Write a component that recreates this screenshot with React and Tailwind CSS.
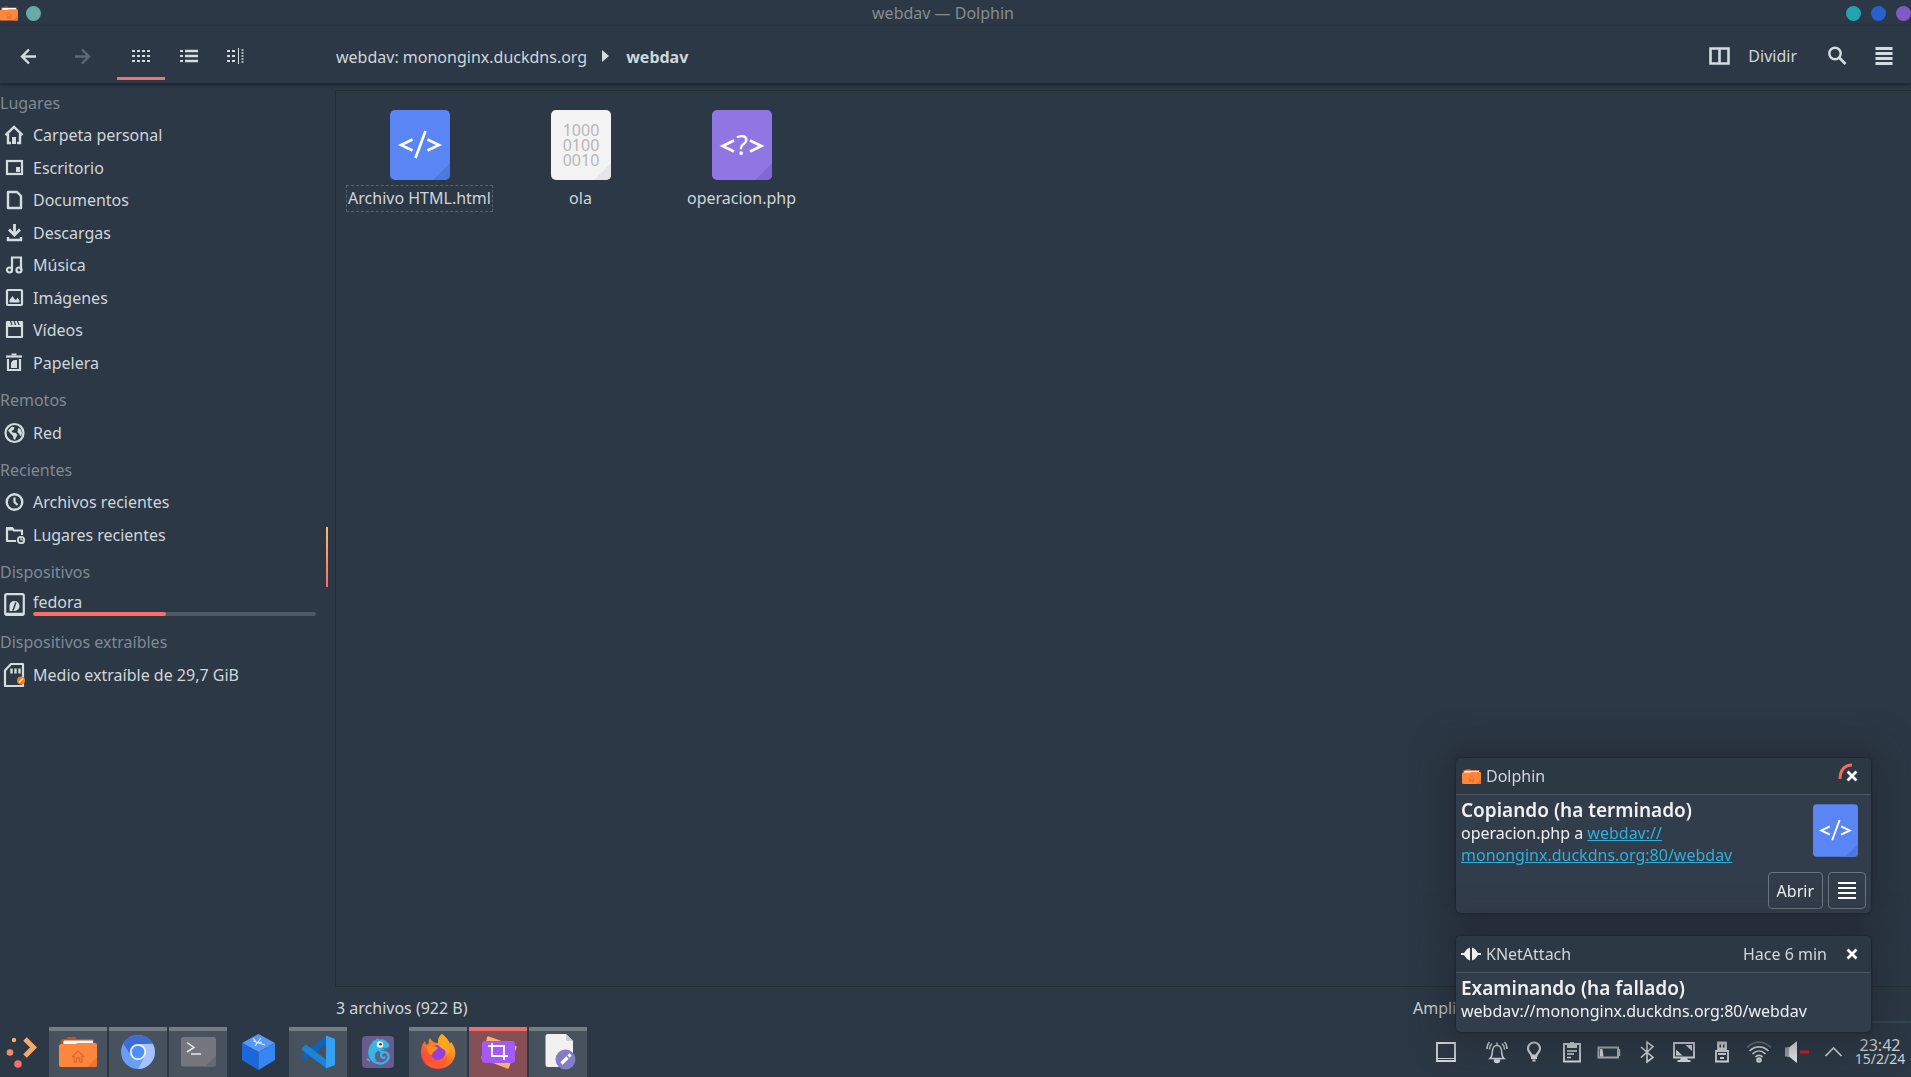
import React from "react";

const LIGHT = "#d3dce0";

function Icon({ size = 20, box, children, className = "" }) {
  const b = box || size;
  return (
    <svg
      width={size}
      height={size}
      viewBox={`0 0 ${b} ${b}`}
      fill="none"
      className={`shrink-0 ${className}`}
      aria-hidden="true"
    >
      {children}
    </svg>
  );
}

/* ---------- sidebar icons (22 x 26 grid) ---------- */

function PlaceIcon({ children }) {
  return (
    <svg width="22" height="26" viewBox="0 0 22 26" fill="none" className="shrink-0" aria-hidden="true">
      {children}
    </svg>
  );
}

const placeIcons = {
  home: (
    <PlaceIcon>
      <path d="M2.500 13.200 11 5l8.500 8.200" stroke={LIGHT} strokeWidth="2.400" />
      <path d="M5 11.500V21h3M17 11.500V21h-3" stroke={LIGHT} strokeWidth="2.400" />
      <rect x="9" y="15" width="4" height="7" fill={LIGHT} />
    </PlaceIcon>
  ),
  desktop: (
    <PlaceIcon>
      <rect x="4" y="6" width="15" height="13" stroke={LIGHT} strokeWidth="2.200" />
      <rect x="13" y="12" width="4" height="5" fill={LIGHT} />
    </PlaceIcon>
  ),
  documents: (
    <PlaceIcon>
      <path d="M5 5h9l4 4v12H5z" stroke={LIGHT} strokeWidth="2.400" strokeLinejoin="round" />
    </PlaceIcon>
  ),
  downloads: (
    <PlaceIcon>
      <path d="M11.500 4v10M6 9.500l5.500 5.500L17 9.500" stroke={LIGHT} strokeWidth="2.800" />
      <path d="M5 17v3h13v-3" stroke={LIGHT} strokeWidth="2.400" />
    </PlaceIcon>
  ),
  music: (
    <PlaceIcon>
      <path d="M9 18V5.500h9V18" stroke={LIGHT} strokeWidth="2.200" />
      <circle cx="6.500" cy="18" r="2.500" stroke={LIGHT} strokeWidth="2.200" />
      <circle cx="16" cy="18" r="2.500" stroke={LIGHT} strokeWidth="2.200" />
    </PlaceIcon>
  ),
  images: (
    <PlaceIcon>
      <rect x="4" y="5" width="15" height="15" rx="1" stroke={LIGHT} strokeWidth="2.200" />
      <path d="M6.500 17.500V15L9.500 11l2 3 1.500 1 1.500-2.500 2 3v2z" fill={LIGHT} />
    </PlaceIcon>
  ),
  videos: (
    <PlaceIcon>
      <path d="M4 8v12h15V5H4z" stroke={LIGHT} strokeWidth="2.200" strokeLinejoin="round" />
      <path d="M3.500 5h15.500v5H3.500z" fill={LIGHT} />
      <path d="m7.500 4 1.500 4M11 4l1.500 4M14.500 4 16 8" stroke="#2c3845" strokeWidth="1.200" />
    </PlaceIcon>
  ),
  trash: (
    <PlaceIcon>
      <path d="M3 6.500h16" stroke={LIGHT} strokeWidth="2.200" />
      <path d="M8.500 4.500h5" stroke={LIGHT} strokeWidth="2" />
      <path d="M5 9v11h12V9" stroke={LIGHT} strokeWidth="2.200" />
      <path d="M8 12.500 10.500 10H14v8H8z" fill={LIGHT} />
    </PlaceIcon>
  ),
  network: (
    <PlaceIcon>
      <circle cx="11.500" cy="13" r="9" stroke={LIGHT} strokeWidth="2.200" />
      <path d="M5 10.500 9 6.500l2.500 1-1 2.500L8.500 11l1 1.500 3.500.5 1.500 2-1.500 2.500-1 2.500-1.500-1-.5-3L7 13z" fill={LIGHT} />
      <path d="m15 8 2.500 1 1.500 3.500-.5 3-1.500.5-1-2.500-1.500-1z" fill={LIGHT} />
    </PlaceIcon>
  ),
  clock: (
    <PlaceIcon>
      <circle cx="11.500" cy="13" r="7.800" stroke={LIGHT} strokeWidth="2.400" />
      <path d="M11.500 8.500V13l3 3" stroke={LIGHT} strokeWidth="2.200" />
    </PlaceIcon>
  ),
  recentFolder: (
    <PlaceIcon>
      <path d="M13 19H4V6h5l2 2.500h8V13" stroke={LIGHT} strokeWidth="2.200" strokeLinejoin="round" />
      <path d="M3 5h6.500l2 3.500H3z" fill={LIGHT} />
      <circle cx="18" cy="18" r="3.200" stroke={LIGHT} strokeWidth="1.800" />
      <path d="M18 15.500V18h2" stroke={LIGHT} strokeWidth="1.200" />
    </PlaceIcon>
  ),
  disk: (
    <PlaceIcon>
      <rect x="2.200" y="2.200" width="18.600" height="20.600" rx="1.500" stroke={LIGHT} strokeWidth="2.200" />
      <path d="M6.500 19v-5.500a5 5 0 0 1 5-4.500 5 5 0 0 1 0 10z" fill={LIGHT} />
      <path d="M9.500 18.500c2-1 2-6.500 3.500-8" stroke="#2c3845" strokeWidth="1.500" />
      <path d="M3 21.500h17" stroke={LIGHT} strokeWidth="1.500" />
    </PlaceIcon>
  ),
  card: (
    <PlaceIcon>
      <path d="M8 2h12v22H2V8.500z" stroke={LIGHT} strokeWidth="2.200" strokeLinejoin="round" />
      <path d="M8.500 6.500v5M12.500 6.500v5M16.500 6.500v5" stroke={LIGHT} strokeWidth="2.400" />
      <circle cx="18" cy="18.500" r="4" fill="#f08218" />
      <path d="m16 20.500 4-4" stroke="#fbe6cf" strokeWidth="1.400" />
    </PlaceIcon>
  ),
};

/* ---------- file type icons ---------- */

function HtmlFile({ className }) {
  return (
    <svg viewBox="0 0 60 70" className={className} fill="none" aria-hidden="true">
      <rect width="60" height="70" rx="5" fill="#5a86f5" />
      <path d="M60 53v12a5 5 0 0 1-5 5H43z" fill="#4d78e2" />
      <path d="M22.500 29.500 11 35l11.500 5.500M37.500 29.500 49 35l-11.500 5.500" stroke="#fff" strokeWidth="2.600" />
      <path d="m35.500 21-10 27" stroke="#fff" strokeWidth="2.600" />
    </svg>
  );
}

function BinaryFile({ className }) {
  return (
    <svg viewBox="0 0 60 70" className={className} fill="none" aria-hidden="true">
      <rect width="60" height="70" rx="5" fill="#f3f3f3" />
      <path d="M60 53v12a5 5 0 0 1-5 5H43z" fill="#e6e6e6" />
      <g fill="#b7b7b7" fontSize="16" textAnchor="middle" fontFamily="'Noto Sans', sans-serif">
        <text x="30" y="26">1000</text>
        <text x="30" y="41">0100</text>
        <text x="30" y="56">0010</text>
      </g>
    </svg>
  );
}

function PhpFile({ className }) {
  return (
    <svg viewBox="0 0 60 70" className={className} fill="none" aria-hidden="true">
      <rect width="60" height="70" rx="5" fill="#9076e3" />
      <path d="M60 53v12a5 5 0 0 1-5 5H43z" fill="#8168d2" />
      <path d="M22 30.500 10.500 36 22 41.500M38 30.500 49.500 36 38 41.500" stroke="#fff" strokeWidth="2.600" />
      <text x="30" y="44.500" fill="#fff" fontSize="27" textAnchor="middle" fontFamily="'Noto Sans', sans-serif">
        ?
      </text>
    </svg>
  );
}

function FolderIcon({ className }) {
  return (
    <svg viewBox="0 0 38 30" className={className} fill="none" aria-hidden="true">
      <path d="M2 9V4a2 2 0 0 1 2-2h3l2-2h7l2 2h15a2 2 0 0 1 2 2v6z" fill="#c4541c" />
      <path d="M4.500 10V4.500a1 1 0 0 1 1-1H34V10z" fill="#fff" />
      <path d="M0 9a2 2 0 0 1 2-2h14l3-1h17a2 2 0 0 1 2 2v20a2 2 0 0 1-2 2H2a2 2 0 0 1-2-2z" fill="#ff863c" />
      <path d="M38 20v8a2 2 0 0 1-2 2h-8z" fill="#ee7530" />
      <path d="m13 20 6-6 6 6M15 19v6h2.500v-4h3v4H23v-6" stroke="#d96a2c" strokeWidth="1.300" />
    </svg>
  );
}

/* ---------- window ---------- */

function TitleBar() {
  return (
    <header className="flex h-[26px] items-center justify-between overflow-hidden">
      <div className="flex w-20 items-center gap-2">
        <FolderIcon className="h-[15px] w-[18px]" />
        <button aria-label="Fijar ventana" className="size-[15px] rounded-full bg-[#67aaa6]" />
      </div>
      <h1 className="pr-10 text-base text-[#868c93]">webdav — Dolphin</h1>
      <div className="flex w-[65px] shrink-0 gap-[10px]">
        <button aria-label="Minimizar" className="size-[15px] shrink-0 rounded-full bg-[#22a3b1]" />
        <button aria-label="Maximizar" className="size-[15px] shrink-0 rounded-full bg-[#2661cf]" />
        <button aria-label="Cerrar" className="size-[15px] shrink-0 rounded-full bg-[#7e5bc6]" />
      </div>
    </header>
  );
}

function ToolButton({ label, active, className = "w-[47px]", children }) {
  return (
    <button
      aria-label={label}
      className={`flex h-12 items-center justify-center border-b-[3px] pt-[2px] ${
        active ? "border-[#f4706a]" : "border-transparent"
      } ${className}`}
    >
      {children}
    </button>
  );
}

function Dots({ xs, size = 3 }) {
  return xs.flatMap((x) =>
    [4, 9, 14].map((y) => <rect key={`${x}-${y}`} x={x} y={y} width={size} height="2" fill={LIGHT} />)
  );
}

function Toolbar() {
  return (
    <div className="relative z-10 flex h-[58px] items-center border-b border-[#222a34] pt-[3px] shadow-[0_1px_3px_#1c232d]">
      <div className="flex w-[335px] shrink-0">
        <ToolButton label="Atrás" className="w-[57px]">
          <Icon>
            <path d="M17 10.500H4M10 3.500l-7 7 7 7" stroke={LIGHT} strokeWidth="2.400" />
          </Icon>
        </ToolButton>
        <ToolButton label="Adelante" className="mr-[10px] w-[50px]">
          <Icon>
            <path d="M3 10.500h13M10 3.500l7 7-7 7" stroke="#5c6874" strokeWidth="2.400" />
          </Icon>
        </ToolButton>
        <ToolButton label="Iconos" active className="w-12">
          <Icon>
            <Dots xs={[1, 6, 11, 16]} />
          </Icon>
        </ToolButton>
        <ToolButton label="Compacto">
          <Icon>
            <Dots xs={[1]} />
            <path d="M6 5h13M6 10h13M6 15h13" stroke={LIGHT} strokeWidth="2.400" />
          </Icon>
        </ToolButton>
        <ToolButton label="Detalles">
          <Icon>
            <Dots xs={[1, 6]} />
            <path d="M12.500 2v16" stroke={LIGHT} />
            <path d="M15.500 4h2M15.500 7h2M15.500 10h2M15.500 13h2M15.500 16h2" stroke={LIGHT} strokeWidth="1.500" />
          </Icon>
        </ToolButton>
      </div>
      <nav className="flex flex-1 items-center pt-[2px] pl-px" aria-label="Ubicación">
        <a href="#servidor">webdav: mononginx.duckdns.org</a>
        <svg width="7" height="12" viewBox="0 0 7 12" className="mr-[13px] mb-[3px] ml-[15px]" aria-hidden="true">
          <path d="M0 0v12l7-6z" fill={LIGHT} />
        </svg>
        <a href="#webdav" className="pl-1 font-bold">
          webdav
        </a>
      </nav>
      <div className="flex items-center pr-1">
        <button className="flex h-12 items-center gap-[18px] pr-4">
          <svg width="21" height="18" viewBox="0 0 21 18" fill="none" aria-hidden="true">
            <path d="M1.500 1.500h18v15h-18zM10.500 1v16" stroke={LIGHT} strokeWidth="2.600" />
          </svg>
          Dividir
        </button>
        <ToolButton label="Buscar">
          <Icon>
            <circle cx="8" cy="7.500" r="5.700" stroke={LIGHT} strokeWidth="2.400" />
            <path d="m12 11.500 6.500 6.500" stroke={LIGHT} strokeWidth="2.600" />
          </Icon>
        </ToolButton>
        <ToolButton label="Menú">
          <Icon>
            <path d="M1.500 2.500h17M1.500 7.500h17M1.500 12.500h17M1.500 17.500h17" stroke={LIGHT} strokeWidth="3" />
          </Icon>
        </ToolButton>
      </div>
    </div>
  );
}

const places = [
  {
    title: "Lugares",
    height: "h-[260px]",
    items: [
      ["home", "Carpeta personal"],
      ["desktop", "Escritorio"],
      ["documents", "Documentos"],
      ["downloads", "Descargas"],
      ["music", "Música"],
      ["images", "Imágenes"],
      ["videos", "Vídeos"],
      ["trash", "Papelera"],
    ],
  },
  { title: "Remotos", height: "h-[33px]", items: [["network", "Red"]] },
  {
    title: "Recientes",
    height: "h-[65px]",
    items: [
      ["clock", "Archivos recientes"],
      ["recentFolder", "Lugares recientes"],
    ],
  },
  { title: "Dispositivos", height: "h-[33px]", items: [["disk", "fedora", 47]] },
  { title: "Dispositivos extraíbles", height: "h-[33px]", items: [["card", "Medio extraíble de 29,7 GiB"]] },
];

function Sidebar() {
  return (
    <aside className="flex w-[335px] shrink-0">
      <div className="flex flex-1 flex-col gap-[5px] pt-[3px]">
        {places.map((group) => (
          <section key={group.title}>
            <h2 className="flex h-8 items-center text-[#7f8a94]">{group.title}</h2>
            <ul className={`grid auto-rows-fr ${group.height}`}>
              {group.items.map(([icon, label, used]) => (
                <li key={label} className="flex">
                  <a href={`#${icon}`} className="flex flex-1 items-center gap-2 pl-[3px]">
                    {placeIcons[icon]}
                    {used ? (
                      <span className="mr-[10px] flex flex-1 flex-col pb-[2px]">
                        <span className="leading-5">{label}</span>
                        <span className="h-1 overflow-hidden rounded-full bg-[#4d5966]">
                          <span className="block h-full rounded-full bg-[#fa6f66]" style={{ width: `${used}%` }} />
                        </span>
                      </span>
                    ) : (
                      <span>{label}</span>
                    )}
                  </a>
                </li>
              ))}
            </ul>
          </section>
        ))}
      </div>
      <div className="mr-[7px] flex w-[2px] items-center pt-[7px]">
        <div className="h-[60px] w-[2px] bg-linear-to-b from-[#fdbd5c] to-[#fb6a68]" />
      </div>
    </aside>
  );
}

const files = [
  ["Archivo HTML.html", HtmlFile, true],
  ["ola", BinaryFile, false],
  ["operacion.php", PhpFile, false],
];

function FileView() {
  return (
    <main className="flex flex-1 flex-wrap content-start border border-r-0 border-[#22302f] pt-[19px] pl-[3px]">
      {files.map(([name, FileIcon, focused]) => (
        <button key={name} className="flex w-[161px] flex-col items-center gap-[5px]">
          <FileIcon className="h-[70px] w-[60px]" />
          <span
            className={`border border-dashed px-px leading-[25px] ${
              focused ? "border-[#56616c]" : "border-transparent"
            }`}
          >
            {name}
          </span>
        </button>
      ))}
    </main>
  );
}

function StatusBar() {
  return (
    <footer className="flex flex-col">
      <div className="flex h-[34px] items-center justify-between pt-2 pl-px">
        <span>3 archivos (922 B)</span>
        <span className="w-[498px]">Ampliación:</span>
      </div>
      <div className="h-[2px] w-20 self-end bg-[#2d4a54]" />
    </footer>
  );
}

/* ---------- notifications ---------- */

function CloseIcon() {
  return (
    <Icon size={12}>
      <path d="m1.500 1.500 9 9M10.500 1.500l-9 9" stroke="#fff" strokeWidth="2.800" />
    </Icon>
  );
}

function Notification({ icon, app, time, busy, children }) {
  return (
    <article className="overflow-hidden rounded-[5px] bg-[#323d4b] text-[#eef0f2] shadow-[0_0_2px_1px_#1f2630,0_0_36px_8px_#1e222d99]">
      <header className="flex h-[37px] items-center border-b border-[#4c5765] bg-[#2d3845] pr-[13px] pl-[5px] text-[#d0d5d9]">
        <span className="mr-[5px] flex w-5 justify-center">{icon}</span>
        <span className="flex-1">{app}</span>
        <span className="mr-[19px]">{time}</span>
        <button aria-label="Cerrar" className="relative flex">
          {busy && (
            <svg width="16" height="18" viewBox="0 0 16 18" fill="none" className="absolute -top-[7px] -left-2" aria-hidden="true">
              <path d="M2 16C2 7 7 2 14 2" stroke="#f26b63" strokeWidth="3" />
            </svg>
          )}
          <CloseIcon />
        </button>
      </header>
      {children}
    </article>
  );
}

function Notifications() {
  return (
    <div className="fixed right-10 bottom-[45px] z-20 flex w-[415px] flex-col gap-[23px]">
      <Notification icon={<FolderIcon className="h-[15px] w-[19px]" />} app="Dolphin" busy>
        <div className="flex justify-between pr-[13px] pl-[5px]">
          <div className="pt-[3px]">
            <h2 className="text-[19px] leading-6 font-semibold">Copiando (ha terminado)</h2>
            <p className="leading-[22px]">
              operacion.php a{" "}
              <a href="#destino" className="text-[#2fafdc] underline">
                webdav://
                <br />
                mononginx.duckdns.org:80/webdav
              </a>
            </p>
          </div>
          <HtmlFile className="mt-[9px] h-[53px] w-[45px]" />
        </div>
        <div className="flex justify-end gap-[5px] px-[5px] pt-[6px] pb-1">
          <button className="h-[37px] rounded border border-[#6b7580] px-2">Abrir</button>
          <button aria-label="Más opciones" className="flex h-[37px] w-[38px] items-center justify-center rounded border border-[#6b7580]">
            <Icon>
              <path d="M1 2h18M1 7h18M1 12h18M1 17h18" stroke="#fff" strokeWidth="2" />
            </Icon>
          </button>
        </div>
      </Notification>
      <Notification
        icon={
          <svg width="20" height="14" viewBox="0 0 20 14" fill="#eef0f2" aria-hidden="true">
            <path d="M0 6h3l3-4 3-1.500v13L6 12 3 8H0zM20 6h-3l-3-4-3-1.500v13l3-1.500 3-4h3z" />
          </svg>
        }
        app="KNetAttach"
        time="Hace 6 min"
      >
        <div className="px-[5px] pt-[3px] pb-[10px]">
          <h2 className="text-[19px] leading-6 font-semibold">Examinando (ha fallado)</h2>
          <p className="leading-[22px]">webdav://mononginx.duckdns.org:80/webdav</p>
        </div>
      </Notification>
    </div>
  );
}

/* ---------- panel ---------- */

const launchers = [
  {
    name: "Archivos",
    state: "open",
    icon: <FolderIcon className="h-[30px] w-[38px]" />,
  },
  {
    name: "Chromium",
    state: "open",
    icon: (
      <Icon size={40}>
        <circle cx="20" cy="20" r="17" fill="#699df6" />
        <path d="M5.300 11.500A17 17 0 0 1 34.700 11.500L20 12.500l-7 11z" fill="#3e6bd6" />
        <path d="M20 12h14.900A17 17 0 0 1 20 37l6.500-12z" fill="#a5c3fa" />
        <circle cx="20" cy="20" r="7.200" fill="#4d90fb" stroke="#eef3fc" strokeWidth="1.800" />
      </Icon>
    ),
  },
  {
    name: "Konsole",
    state: "open",
    icon: (
      <Icon size={40}>
        <rect x="3" y="5" width="35" height="29.500" rx="2.500" fill="#74787e" />
        <path d="M38 24v8a2.500 2.500 0 0 1-2.500 2.500H27z" fill="#666a70" />
        <path d="m9 10.500 7 5-7 4.500" stroke="#e6e8e9" strokeWidth="1.500" />
        <path d="M13 22h10" stroke="#e6e8e9" strokeWidth="1.500" />
      </Icon>
    ),
  },
  {
    name: "VirtualBox",
    state: "idle",
    icon: (
      <Icon size={40}>
        <path d="M20.500 2 37 11 20.500 20 4 11z" fill="#5797f6" />
        <path d="M4 11l16.500 9v18L4 28z" fill="#1c68d8" />
        <path d="M37 11l-16.500 9v18L37 28z" fill="#3585f3" />
        <path d="m15 9 12 4M23 6l-6 8M15 6l4 5 5-1" stroke="#d6e6fd" strokeWidth="1.200" />
      </Icon>
    ),
  },
  {
    name: "Visual Studio Code",
    state: "open",
    icon: (
      <Icon size={40}>
        <path d="M28 4v8L8 28l-4-3.500v-2z" fill="#1064b6" />
        <path d="M4 16l4-3.500L28 27.500V36L4 18z" fill="#1c83d8" />
        <path d="M28 3.500 37 7v26l-9 3.500z" fill="#33a0f2" />
      </Icon>
    ),
  },
  {
    name: "openSUSE",
    state: "idle",
    icon: (
      <Icon size={40}>
        <rect x="4" y="4" width="32" height="32" rx="4" fill="#665d8e" />
        <path
          d="M19 11c-6 2-8.500 8-7 13 1.500 5.500 8 9 13.500 7 4.500-1.500 6.500-6.500 4-9.500-2.500-2.500-6.500-1-6.500 2 0 2 2 3 3.500 2"
          stroke="#36b6e0"
          strokeWidth="2.200"
          strokeLinecap="round"
        />
        <path d="M12 26c-3-5-2-12 3-16l-1-1 4-1 1-2 2 1.500c4-1 8 1 10.500 5.500l-1 3-5 2c-4 0-8 1-8.500 5-.3 3 .5 5 2 6.500z" fill="#36b6e0" />
        <path d="m9 27 3 2M21 17l2 3 3-.5" stroke="#36b6e0" strokeWidth="1.800" />
        <path d="M24 17c3 0 5-.5 7-2" stroke="#2a7fb0" strokeWidth="1" />
        <circle cx="22" cy="12.500" r="3.200" fill="#f4f8fa" />
        <circle cx="22.500" cy="12.300" r="1.300" fill="#2f3541" />
      </Icon>
    ),
  },
  {
    name: "Firefox",
    state: "open",
    icon: (
      <Icon size={40}>
        <defs>
          <linearGradient id="ffBody" x1="36" y1="4" x2="8" y2="36" gradientUnits="userSpaceOnUse">
            <stop offset="0" stopColor="#ffc12e" />
            <stop offset="0.500" stopColor="#ff7a22" />
            <stop offset="1" stopColor="#ff2f45" />
          </linearGradient>
        </defs>
        <path
          d="M24 2c5 4 7 7 8 10l1-2c4 5 5 10 4 14-2 8-9 13-17 13C10 37 3 30 3 21c0-5 1-9 4-12l1 4 3-2c-1-2 0-4 1-5 2 4 5 5 8 5 0-4 1-7 4-9z"
          fill="url(#ffBody)"
        />
        <circle cx="20" cy="20.500" r="7.500" fill="#9640da" />
        <path d="M9 14c4-1 8 0 11 2l-3 3c-2 1-3 2-3 4-4-1-6-5-5-9z" fill="#ff8a20" />
        <path d="M24 2c5 4 8 8 8 13 0 3-1 6-3 8 0-7-9-6-9-12 0-4 1-7 4-9z" fill="#ffa524" />
        <path d="M5 22c2 6 8 9 14 8 5 0 8-3 10-6 0 8-5 12-11 12C11 36 5 30 5 22z" fill="#ff5a32" />
      </Icon>
    ),
  },
  {
    name: "Captura de pantalla",
    state: "active",
    icon: (
      <Icon size={40}>
        <path d="m10 5 28 10-8 21L4 26z" fill="#fcb264" stroke="#fcb264" strokeWidth="1.500" strokeLinejoin="round" />
        <rect x="4" y="9" width="33" height="22" rx="3" fill="#a55af8" />
        <path d="M14 11v13h16M10 14h16v14" stroke="#fff" strokeWidth="1.800" />
      </Icon>
    ),
  },
  {
    name: "Editor de texto",
    state: "open",
    icon: (
      <Icon size={40}>
        <path d="M10 2h18l7 7v23a3 3 0 0 1-3 3H10a2.500 2.500 0 0 1-2.500-2.500v-28A2.500 2.500 0 0 1 10 2z" fill="#f1f1f2" />
        <path d="M28 2v5a2 2 0 0 0 2 2h5z" fill="#cbccd0" />
        <circle cx="27.500" cy="27.500" r="10" fill="#837cc6" />
        <path d="m23.500 31.500 6-6" stroke="#fff" strokeWidth="3.200" />
        <path d="m30.500 24.500 2-2" stroke="#fff" strokeWidth="3.200" />
      </Icon>
    ),
  },
];

const taskStyles = {
  open: "border-[#757d84] bg-[#47525e]",
  idle: "border-transparent",
  active: "border-[#ec6d66] bg-[#864e55]",
};

function TaskBar() {
  return (
    <div className="flex">
      <button aria-label="Menú de aplicaciones" className="flex w-[47px] items-center justify-end pr-2">
        <Icon size={34}>
          <circle cx="9" cy="5" r="2.200" fill="#f6b25e" />
          <circle cx="5" cy="17.500" r="3.300" fill="#f58c66" />
          <circle cx="13" cy="29" r="3.800" fill="#f3706b" />
          <path d="m20 4 8.500 8.500L20 21" stroke="#f8a962" strokeWidth="5" />
        </Icon>
      </button>
      <div className="ml-[2px] flex gap-[2px]">
        {launchers.map((app) => (
          <button
            key={app.name}
            aria-label={app.name}
            className={`flex h-[50px] w-[58px] items-center justify-center border-t-4 pb-1 ${taskStyles[app.state]}`}
          >
            {app.icon}
          </button>
        ))}
      </div>
    </div>
  );
}

const TRAY = "#d5dadd";

const trayIcons = [
  [
    "Notificaciones",
    <g stroke={TRAY} strokeWidth="1.500">
      <path d="M5 18.500c2.500-2 2-5 2.500-8C8 7 9.500 5.500 12 5.500s4 1.500 4.500 5c.5 3 0 6 2.500 8z" />
      <path d="M12 2.500v3M4.500 9.500c0-2.500 1-4.500 2.500-6M2 9c0-3 1-5.500 2.500-7M19.500 9.500c0-2.500-1-4.500-2.500-6M22 9c0-3-1-5.500-2.500-7" />
      <path d="M9.500 20h5a2.500 2.500 0 0 1-5 0z" fill={TRAY} />
    </g>,
  ],
  [
    "Luz nocturna",
    <g>
      <path d="M9.500 15.500c0-2-3.500-3.500-3.500-7a6 6 0 0 1 12 0c0 3.500-3.500 5-3.500 7z" stroke={TRAY} strokeWidth="2.200" />
      <path d="M9 16h6v3H9zM10.500 19.500h3v2h-3z" fill={TRAY} />
    </g>,
  ],
  [
    "Portapapeles",
    <g>
      <path d="M4 4h16v17.500H4z" stroke={TRAY} strokeWidth="1.800" />
      <path d="M7 4h3V2h4v2h3v4H7z" fill={TRAY} />
      <path d="M7 11h10M7 14h7M7 17.500h4" stroke={TRAY} strokeWidth="1.500" />
    </g>,
  ],
  [
    "Batería",
    <g>
      <path d="M1.500 7.500h19.500v10H1.500z" stroke="#a9b0b6" strokeWidth="2" />
      <path d="M3 9h2.500l1 7.500H3z" fill={TRAY} />
      <path d="M22.500 9v7" stroke="#a9b0b6" strokeWidth="1.500" />
    </g>,
  ],
  ["Bluetooth", <path d="m6 7 12 10.500-6 4.500V2l6 4.500L6 17.500" stroke={TRAY} strokeWidth="1.600" />],
  [
    "Pantallas",
    <g>
      <path d="M2 3h20v14.500H2z" stroke={TRAY} strokeWidth="1.800" />
      <path d="M13.500 5H20v6zM4 9.500l6.500 6H4zM9 18h6l1 2h2.500v2h-13v-2H8z" fill={TRAY} />
    </g>,
  ],
  [
    "Dispositivos extraíbles",
    <g>
      <path d="M8 10V2.500h8V10" stroke={TRAY} strokeWidth="1.800" />
      <path d="M8 3h8v7H8z" fill={TRAY} />
      <path d="M9.500 4.500h1.500v3H9.500zM13 4.500h1.500v3H13z" fill="#2c3845" />
      <path d="M6 11h12v10.500H6z" stroke={TRAY} strokeWidth="1.800" />
      <path d="M8 14h8M10 18h4" stroke={TRAY} strokeWidth="2" />
    </g>,
  ],
  [
    "Redes",
    <g strokeWidth="1.600">
      <path d="M0 7.500C7 .5 17 .5 24 7.500" stroke="#6d7781" />
      <path d="M2.500 11c5.500-5.500 13.500-5.500 19 0M5.500 14c4-4 9-4 13 0M8.500 17c2-2.200 5-2.200 7 0" stroke={TRAY} />
      <circle cx="12" cy="20" r="2" fill="#a9b0b6" stroke={TRAY} />
    </g>,
  ],
  [
    "Volumen",
    <g>
      <path d="M1 7.500v9M3 7v10" stroke={TRAY} strokeWidth="1.300" />
      <path d="M4 7.500 12 1v22l-8-6.500z" fill="#e4e6e8" />
      <path d="M15 12h9" stroke="#d3201f" strokeWidth="3" />
    </g>,
  ],
  ["Mostrar elementos ocultos", <path d="m3.500 16 8-8 8 8" stroke={TRAY} strokeWidth="1.600" />],
];

function Tray() {
  return (
    <div className="flex items-center">
      <button aria-label="Mostrar el escritorio" className="mr-[22px] flex">
        <Icon size={20}>
          <path d="M1 1h18v18H1z" stroke={TRAY} strokeWidth="1.800" />
          <path d="M2 16.500h16" stroke={TRAY} />
        </Icon>
      </button>
      <div className="grid w-[375px] grid-cols-10">
        {trayIcons.map(([label, drawing]) => (
          <button key={label} aria-label={label} className="flex justify-center">
            <Icon size={24}>{drawing}</Icon>
          </button>
        ))}
      </div>
      <time className="flex w-[58px] flex-col items-center pr-1 text-[#cdd3d7]">
        <span className="text-base leading-[14px]">23:42</span>
        <span className="text-sm leading-[14px]">15/2/24</span>
      </time>
    </div>
  );
}

export default function App() {
  return (
    <div className="flex min-h-screen flex-col bg-[#2c3845] font-['Noto_Sans',sans-serif] text-base text-[#cfd6da]">
      <TitleBar />
      <Toolbar />
      <div className="flex flex-1">
        <Sidebar />
        <div className="flex flex-1 flex-col pt-[6px]">
          <FileView />
          <StatusBar />
        </div>
      </div>
      <div className="flex h-[54px] items-end justify-between">
        <TaskBar />
        <div className="flex h-[50px] items-center">
          <Tray />
        </div>
      </div>
      <Notifications />
    </div>
  );
}
